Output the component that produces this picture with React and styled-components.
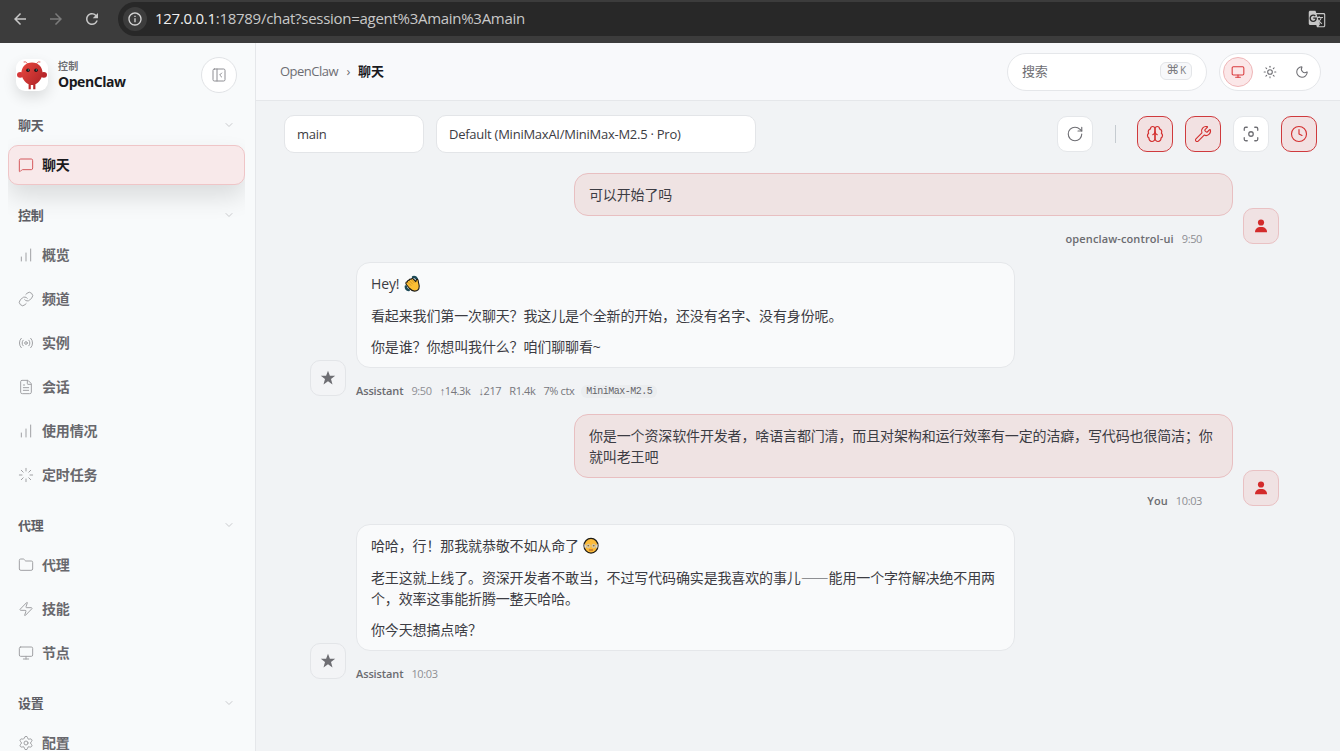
import React from 'react';
import styled, { createGlobalStyle, css } from 'styled-components';
import {
  ChartNoAxesColumnIncreasing,
  ChevronDown,
  Clock,
  FileText,
  Focus,
  Folder,
  Link,
  Loader,
  MessageSquare,
  Monitor,
  Moon,
  PanelLeftClose,
  Radio,
  RotateCw,
  Settings,
  Sun,
  Wrench,
  Zap,
} from 'lucide-react';
import { MdArrowBack, MdArrowForward, MdGTranslate, MdInfoOutline, MdRefresh } from 'react-icons/md';

const GlobalStyle = createGlobalStyle`
  * {
    box-sizing: border-box;
  }

  body {
    margin: 0;
    background: #f1f3f5;
    color: #3c3c43;
    font-family: "Open Sans", "Noto Sans CJK SC", sans-serif;
    font-size: 14px;
    letter-spacing: -0.01em;
    overflow: hidden;
  }

  svg {
    display: block;
    flex-shrink: 0;
  }
`;

const Page = styled.div`
  display: flex;
  flex-direction: column;
  height: 751px;
  overflow: hidden;
`;

/* browser bar */

const BrowserBar = styled.div`
  display: flex;
  align-items: flex-start;
  flex-shrink: 0;
  height: 43px;
  padding: 2px 0 0 11px;
  background: #3c3c3c;
  color: #c7c7c7;
`;

const BrowserButton = styled.div`
  display: flex;
  align-items: center;
  justify-content: center;
  width: 18px;
  height: 34px;
  margin-right: 18px;
  color: ${(props) => (props.$dim ? '#7b7b7b' : '#c7c7c7')};
`;

const AddressBar = styled.div`
  display: flex;
  flex: 1;
  align-items: center;
  height: 34px;
  margin-left: -1px;
  padding: 0 14px 0 5px;
  background: #282828;
  border-radius: 17px 0 0 17px;
`;

const SiteInfo = styled.div`
  display: flex;
  align-items: center;
  justify-content: center;
  width: 24px;
  height: 24px;
  border-radius: 50%;
  background: #3c3c3c;
  color: #d5d5d5;
`;

const Url = styled.div`
  flex: 1;
  margin-left: 8px;
  padding-bottom: 2px;
  color: #c8c8c8;
  font-size: 15px;
  line-height: 20px;
  letter-spacing: -0.28px;

  b {
    color: #efefef;
    font-weight: 400;
  }
`;

const Shell = styled.div`
  display: flex;
  flex: 1;
  min-height: 0;
`;

/* sidebar */

const Sidebar = styled.aside`
  width: 256px;
  flex-shrink: 0;
  background: #f8fafb;
  border-right: 1px solid #e5e7ea;
  overflow: hidden;
`;

const Brand = styled.div`
  display: flex;
  align-items: center;
  height: 64px;
  padding: 0 18px 0 16px;
`;

const LogoTile = styled.div`
  width: 32px;
  height: 32px;
  border-radius: 9px;
  background: #fff;
  box-shadow: 0 6px 14px rgba(0, 0, 0, 0.12);
`;

const BrandText = styled.div`
  flex: 1;
  margin-left: 10px;
`;

const Eyebrow = styled.div`
  color: #6e6e73;
  font-size: 10px;
  font-weight: 600;
  line-height: 14px;
  letter-spacing: 0.3px;
`;

const BrandName = styled.div`
  color: #1a1a1e;
  font-size: 14px;
  font-weight: 700;
  line-height: 18px;
  letter-spacing: -0.45px;
`;

const CollapseButton = styled.button`
  display: flex;
  align-items: center;
  justify-content: center;
  width: 36px;
  height: 36px;
  padding: 0;
  border: 1px solid #e1e3e6;
  border-radius: 50%;
  background: #fff;
  color: #8e8e93;
`;

const Nav = styled.nav`
  margin: 0 10px 0 8px;
  padding-top: 2px;
  overflow: hidden;
`;

const NavSection = styled.section`
  margin-bottom: 14px;
`;

const SectionTitle = styled.div`
  display: flex;
  align-items: center;
  justify-content: space-between;
  height: 32px;
  margin-bottom: 4px;
  padding: 0 10px;
  color: #5e5e65;
  font-size: 13px;
  font-weight: 600;
  letter-spacing: -0.3px;

  svg {
    color: #c9cacd;
  }
`;

const NavLabel = styled.span`
  padding-bottom: 2px;
`;

const NavItem = styled.a`
  display: flex;
  align-items: center;
  gap: 8px;
  height: 40px;
  margin-bottom: 4px;
  padding: 0 9px;
  border: 1px solid transparent;
  border-radius: 10px;
  color: #68686d;
  font-weight: 600;

  svg {
    color: #a0a1a4;
  }

  ${(props) =>
    props.$active &&
    css`
      border-color: #efc5c7;
      background: #f8e9ea;
      box-shadow: 0 12px 24px rgba(0, 0, 0, 0.12);
      color: #1a1a1e;

      svg {
        color: #d5585c;
      }
    `}
`;

/* main area */

const Main = styled.main`
  display: flex;
  flex: 1;
  flex-direction: column;
  min-width: 0;
`;

const Topbar = styled.header`
  display: flex;
  align-items: center;
  height: 58px;
  padding: 0 19px 0 24px;
  border-bottom: 1px solid #e5e7ea;
  background: #f8f9fb;
`;

const Breadcrumb = styled.div`
  display: flex;
  flex: 1;
  align-items: center;
  padding-bottom: 2px;
  color: #6e6e73;
  font-size: 13px;
  letter-spacing: -0.5px;

  span {
    width: 20px;
    text-align: center;
  }

  b {
    color: #1a1a1e;
    font-weight: 600;
    letter-spacing: -0.2px;
  }
`;

const Search = styled.div`
  display: flex;
  align-items: center;
  justify-content: space-between;
  width: 200px;
  height: 38px;
  margin-right: 12px;
  padding: 0 14px 2px 14px;
  border: 1px solid #e5e7ea;
  border-radius: 19px;
  background: #fff;
  color: #6e6e73;
  font-size: 13px;
`;

const Kbd = styled.kbd`
  display: flex;
  align-items: center;
  justify-content: center;
  gap: 1px;
  width: 32px;
  height: 18px;
  padding-bottom: 1px;
  border: 1px solid #e3e5e8;
  border-radius: 6px;
  background: #f7f8fa;
  color: #7b7b80;
  font-family: "Open Sans", "DejaVu Sans", sans-serif;
  font-size: 10px;
  letter-spacing: 0;

  i {
    font-family: "DejaVu Sans", sans-serif;
    font-size: 13px;
    font-style: normal;
    line-height: 16px;
  }
`;

const ThemeSwitch = styled.div`
  display: flex;
  gap: 2px;
  padding: 3px;
  border: 1px solid #e5e7ea;
  border-radius: 19px;
  background: #fff;
`;

const ThemeButton = styled.button`
  display: flex;
  align-items: center;
  justify-content: center;
  width: 30px;
  height: 30px;
  padding: 0;
  border: 1px solid ${(props) => (props.$active ? '#efb6b8' : 'transparent')};
  border-radius: 50%;
  background: ${(props) => (props.$active ? '#fbe7e8' : 'transparent')};
  color: ${(props) => (props.$active ? '#d93a3c' : '#6e6e73')};
`;

const Toolbar = styled.div`
  display: flex;
  align-items: center;
  gap: 12px;
  height: 66px;
  padding: 0 23px 0 28px;
`;

const Select = styled.div`
  width: ${(props) => props.$width}px;
  height: 38px;
  padding: 0 12px;
  border: 1px solid #e3e5e8;
  border-radius: 10px;
  background: #fff;
  color: #3c3c43;
  font-size: 13px;
  line-height: 36px;
  letter-spacing: -0.25px;
`;

const Spacer = styled.div`
  flex: 1;
`;

const Divider = styled.div`
  width: 1px;
  height: 18px;
  margin: 0 9px 0 10px;
  background: #c5cbd0;
`;

const ToolButton = styled.button`
  display: flex;
  align-items: center;
  justify-content: center;
  width: 36px;
  height: 36px;
  padding: 0;
  border: 1px solid ${(props) => (props.$active ? '#cf3a3d' : '#e5e7ea')};
  border-radius: 10px;
  background: ${(props) => (props.$active ? '#f2e1e2' : '#fff')};
  color: ${(props) => (props.$active ? '#d32f2f' : '#6e6e73')};
`;

/* chat thread */

const Thread = styled.div`
  display: flex;
  flex-direction: column;
  gap: 16px;
  padding: 6px 61px 0 54px;
`;

const Group = styled.div`
  display: flex;
  flex-direction: ${(props) => (props.$user ? 'row-reverse' : 'row')};
  align-items: flex-end;
  gap: 10px;
`;

const Avatar = styled.div`
  display: flex;
  align-items: center;
  justify-content: center;
  width: 36px;
  height: 36px;
  margin-bottom: 2px;
  border: 1px solid ${(props) => (props.$user ? '#e9c1c3' : '#e3e5e8')};
  border-radius: 10px;
  background: ${(props) => (props.$user ? '#f0e2e3' : '#f3f4f6')};
  color: ${(props) => (props.$user ? '#d32b2b' : '#6e6e73')};
`;

const Bubble = styled.div`
  width: 659px;
  padding: 10px 14px;
  border: 1px solid ${(props) => (props.$user ? '#e8bfc1' : '#e5e7ea')};
  border-radius: 14px;
  background: ${(props) => (props.$user ? '#efe3e3' : '#f9fafb')};
  color: #3c3c43;
  line-height: 21px;

  p {
    margin: 0;
  }

  p + p {
    margin-top: 10.5px;
  }

  svg {
    display: inline-block;
    margin-left: 1px;
    vertical-align: -3px;
  }
`;

/* the CJK face joins two dashes into one line */
const Dash = styled.span`
  font-family: "Noto Sans CJK SC", sans-serif;
  line-height: 1;
`;

const Meta = styled.div`
  display: flex;
  align-items: center;
  justify-content: ${(props) => (props.$user ? 'flex-end' : 'flex-start')};
  gap: 8px;
  height: 14px;
  margin-top: 16px;
  padding-right: 31px;
  color: #77777c;
  font-size: 11px;
  line-height: 14px;
  letter-spacing: -0.38px;
`;

const Sender = styled.span`
  color: #6b6b70;
  font-weight: 600;
  letter-spacing: ${(props) => (props.$user ? '0.12px' : '-0.12px')};
`;

const Time = styled.span`
  color: #8e8e93;
`;

const Arrow = styled.span`
  font-family: "Liberation Sans", sans-serif;
`;

const ModelTag = styled.span`
  height: 13px;
  margin-left: -1px;
  padding: 0 5px;
  border-radius: 6px;
  background: #ebedef;
  color: #66666b;
  font-family: "Liberation Mono", monospace;
  font-size: 10px;
  letter-spacing: -0.5px;
`;

const navSections = [
  { title: '聊天', items: [{ label: '聊天', icon: MessageSquare, active: true }] },
  {
    title: '控制',
    items: [
      { label: '概览', icon: ChartNoAxesColumnIncreasing },
      { label: '频道', icon: Link },
      { label: '实例', icon: Radio },
      { label: '会话', icon: FileText },
      { label: '使用情况', icon: ChartNoAxesColumnIncreasing },
      { label: '定时任务', icon: Loader },
    ],
  },
  {
    title: '代理',
    items: [
      { label: '代理', icon: Folder },
      { label: '技能', icon: Zap },
      { label: '节点', icon: Monitor },
    ],
  },
  { title: '设置', items: [{ label: '配置', icon: Settings }] },
];

function Logo() {
  return (
    <svg width="32" height="32" viewBox="0 0 32 32">
      <defs>
        <linearGradient id="shell" x1="0" y1="0" x2="1" y2="1">
          <stop offset="0" stopColor="#e8473f" />
          <stop offset="1" stopColor="#a91f24" />
        </linearGradient>
      </defs>
      <path d="M11.5 4.500Q9.500 2 8 2.800M20.500 4.500q2-2.500 3.500-1.700" fill="none" stroke="#e0605c" strokeLinecap="round" />
      <ellipse cx="4.200" cy="15.800" rx="3.200" ry="2.900" fill="#d5383a" />
      <ellipse cx="27.800" cy="15.800" rx="3.200" ry="2.900" fill="#b9262b" />
      <path
        d="M16 3.400c6.200 0 10.600 4.600 10.600 10.600 0 5-3.600 9.400-7.200 11.200v5h-2.200v-4.200h-2.400v4.200h-2.200v-5C9 23.400 5.400 19 5.400 14 5.400 8 9.800 3.400 16 3.400z"
        fill="url(#shell)"
      />
      <circle cx="12" cy="11.300" r="1.800" fill="#1c1416" />
      <circle cx="20" cy="11.300" r="1.800" fill="#1c1416" />
      <circle cx="12.400" cy="11" r="0.700" fill="#4d8a88" />
      <circle cx="20.400" cy="11" r="0.700" fill="#4d8a88" />
    </svg>
  );
}

function BrainIcon() {
  return (
    <svg width="18" height="18" viewBox="0 0 24 24" fill="none" stroke="currentColor" strokeWidth="1.600" strokeLinecap="round" strokeLinejoin="round">
      <path d="M12 5a3 3 0 1 0-5.997.125 4 4 0 0 0-2.526 5.770 4 4 0 0 0 .556 6.588A4 4 0 1 0 12 18Z" />
      <path d="M12 5a3 3 0 1 1 5.997.125 4 4 0 0 1 2.526 5.770 4 4 0 0 1-.556 6.588A4 4 0 1 1 12 18Z" />
      <path d="M15 13a4.500 4.500 0 0 1-3-4 4.500 4.500 0 0 1-3 4" />
    </svg>
  );
}

function UserIcon() {
  return (
    <svg width="12" height="14" viewBox="0 0 12 14" fill="currentColor">
      <circle cx="6" cy="3.500" r="3.100" />
      <path d="M0 13.300C0 10 2 8 6 8s6 2 6 5.300z" />
    </svg>
  );
}

function StarIcon() {
  return (
    <svg width="16" height="16" viewBox="0 0 16 16" fill="currentColor">
      <path d="M8 .8l1.900 5h5.300l-4.200 3.300 1.500 5.300L8 11.300l-4.500 3.100L5 9.100.8 5.800h5.300z" />
    </svg>
  );
}

function WaveEmoji() {
  return (
    <svg width="16" height="17" viewBox="0 0 16 17">
      <path d="M9 2.200q2.500-.6 3.800 1.600M1.800 11.500q0 3 3 3.600" stroke="#1c4a57" strokeWidth="2.400" strokeLinecap="round" fill="none" />
      <path
        d="M1.900 7.900c.1-1 .9-1.300 1.500-1-.2-1.200.8-1.900 1.700-1.400-.1-1.200 1.100-1.800 2-1.100.3-1 1.500-1.200 2.200-.4l2.500 2.600c.2-1.300.6-2.300 1.500-2.200.9.1 1 .9 1 1.800 0 1.600.9 2.900.9 5 0 2.900-1.900 4.900-4.700 4.900-2.200 0-3.500-1.100-4.900-2.600L2.300 9.500c-.4-.5-.5-1-.4-1.600z"
        fill="#fcbf34"
        stroke="#1b1a17"
        strokeWidth="1.100"
        strokeLinejoin="round"
      />
      <path d="M3.600 7l3.600 3.700M5.200 5.600l3.600 3.700M7.200 4.500l3.300 3.500" stroke="#b7791f" strokeWidth=".6" fill="none" />
    </svg>
  );
}

function OldManEmoji() {
  return (
    <svg width="16" height="17" viewBox="0 0 16 17">
      <ellipse cx="8" cy="8.700" rx="7" ry="7.400" fill="#fcbb3a" stroke="#1b1a17" strokeWidth="1.200" />
      <path d="M1.600 6.500c-.5 2.200-.2 4 .6 5.300l.9-2.600zM14.400 6.500c.5 2.200.2 4-.6 5.300l-.9-2.600z" fill="#d8dadd" />
      <g fill="#fbd88a" stroke="#c9c4b8" strokeWidth=".8">
        <circle cx="5.300" cy="9" r="1.800" />
        <circle cx="10.700" cy="9" r="1.800" />
      </g>
      <path d="M4.500 8.800h1.600M9.900 8.800h1.600" stroke="#33302a" strokeWidth=".9" />
      <path d="M6.300 13h3.400" stroke="#a8551f" strokeWidth="1" strokeLinecap="round" />
    </svg>
  );
}

function Message({ user, sender, time, children, extra }) {
  return (
    <Group $user={user}>
      <Avatar $user={user}>{user ? <UserIcon /> : <StarIcon />}</Avatar>
      <div>
        <Bubble $user={user}>{children}</Bubble>
        <Meta $user={user}>
          <Sender $user={user}>{sender}</Sender>
          <Time>{time}</Time>
          {extra}
        </Meta>
      </div>
    </Group>
  );
}

function App() {
  return (
    <Page lang="zh-CN">
      <GlobalStyle />
      <BrowserBar>
        <BrowserButton><MdArrowBack size={18} /></BrowserButton>
        <BrowserButton $dim><MdArrowForward size={18} /></BrowserButton>
        <BrowserButton><MdRefresh size={18} /></BrowserButton>
        <AddressBar>
          <SiteInfo><MdInfoOutline size={16} /></SiteInfo>
          <Url><b>127.0.0.1</b>:18789/chat?session=agent%3Amain%3Amain</Url>
          <MdGTranslate size={18} />
        </AddressBar>
      </BrowserBar>

      <Shell>
        <Sidebar>
          <Brand>
            <LogoTile><Logo /></LogoTile>
            <BrandText>
              <Eyebrow>控制</Eyebrow>
              <BrandName>OpenClaw</BrandName>
            </BrandText>
            <CollapseButton><PanelLeftClose size={16} strokeWidth={1.5} /></CollapseButton>
          </Brand>
          <Nav>
            {navSections.map((section) => (
              <NavSection key={section.title}>
                <SectionTitle>
                  <NavLabel>{section.title}</NavLabel>
                  <ChevronDown size={12} strokeWidth={2} />
                </SectionTitle>
                {section.items.map(({ label, icon: Icon, active }) => (
                  <NavItem key={label} $active={active}>
                    <Icon size={16} strokeWidth={1.5} />
                    <NavLabel>{label}</NavLabel>
                  </NavItem>
                ))}
              </NavSection>
            ))}
          </Nav>
        </Sidebar>

        <Main>
          <Topbar>
            <Breadcrumb>
              OpenClaw<span>›</span><b>聊天</b>
            </Breadcrumb>
            <Search>
              搜索
              <Kbd><i>⌘</i>K</Kbd>
            </Search>
            <ThemeSwitch>
              <ThemeButton $active><Monitor size={14} strokeWidth={1.8} /></ThemeButton>
              <ThemeButton><Sun size={14} strokeWidth={1.8} /></ThemeButton>
              <ThemeButton><Moon size={14} strokeWidth={1.8} /></ThemeButton>
            </ThemeSwitch>
          </Topbar>

          <Toolbar>
            <Select $width={140}>main</Select>
            <Select $width={320}>Default (MiniMaxAI/MiniMax-M2.5 · Pro)</Select>
            <Spacer />
            <ToolButton><RotateCw size={18} strokeWidth={1.5} /></ToolButton>
            <Divider />
            <ToolButton $active><BrainIcon /></ToolButton>
            <ToolButton $active><Wrench size={18} strokeWidth={1.5} /></ToolButton>
            <ToolButton><Focus size={18} strokeWidth={1.7} /></ToolButton>
            <ToolButton $active><Clock size={18} strokeWidth={1.5} /></ToolButton>
          </Toolbar>

          <Thread>
            <Message user sender="openclaw-control-ui" time="9:50">
              <p>可以开始了吗</p>
            </Message>
            <Message
              sender="Assistant"
              time="9:50"
              extra={
                <>
                  <span><Arrow>↑</Arrow>14.3k</span>
                  <span><Arrow>↓</Arrow>217</span>
                  <span>R1.4k</span>
                  <span>7% ctx</span>
                  <ModelTag>MiniMax-M2.5</ModelTag>
                </>
              }
            >
              <p>Hey! <WaveEmoji /></p>
              <p>看起来我们第一次聊天？我这儿是个全新的开始，还没有名字、没有身份呢。</p>
              <p>你是谁？你想叫我什么？咱们聊聊看~</p>
            </Message>
            <Message user sender="You" time="10:03">
              <p>你是一个资深软件开发者，啥语言都门清，而且对架构和运行效率有一定的洁癖，写代码也很简洁；你就叫老王吧</p>
            </Message>
            <Message sender="Assistant" time="10:03">
              <p>哈哈，行！那我就恭敬不如从命了 <OldManEmoji /></p>
              <p>
                老王这就上线了。资深开发者不敢当，不过写代码确实是我喜欢的事儿<Dash>——</Dash>能用一个字符解决绝不用两个，效率这事能折腾一整天哈哈。
              </p>
              <p>你今天想搞点啥？</p>
            </Message>
          </Thread>
        </Main>
      </Shell>
    </Page>
  );
}

export default App;
